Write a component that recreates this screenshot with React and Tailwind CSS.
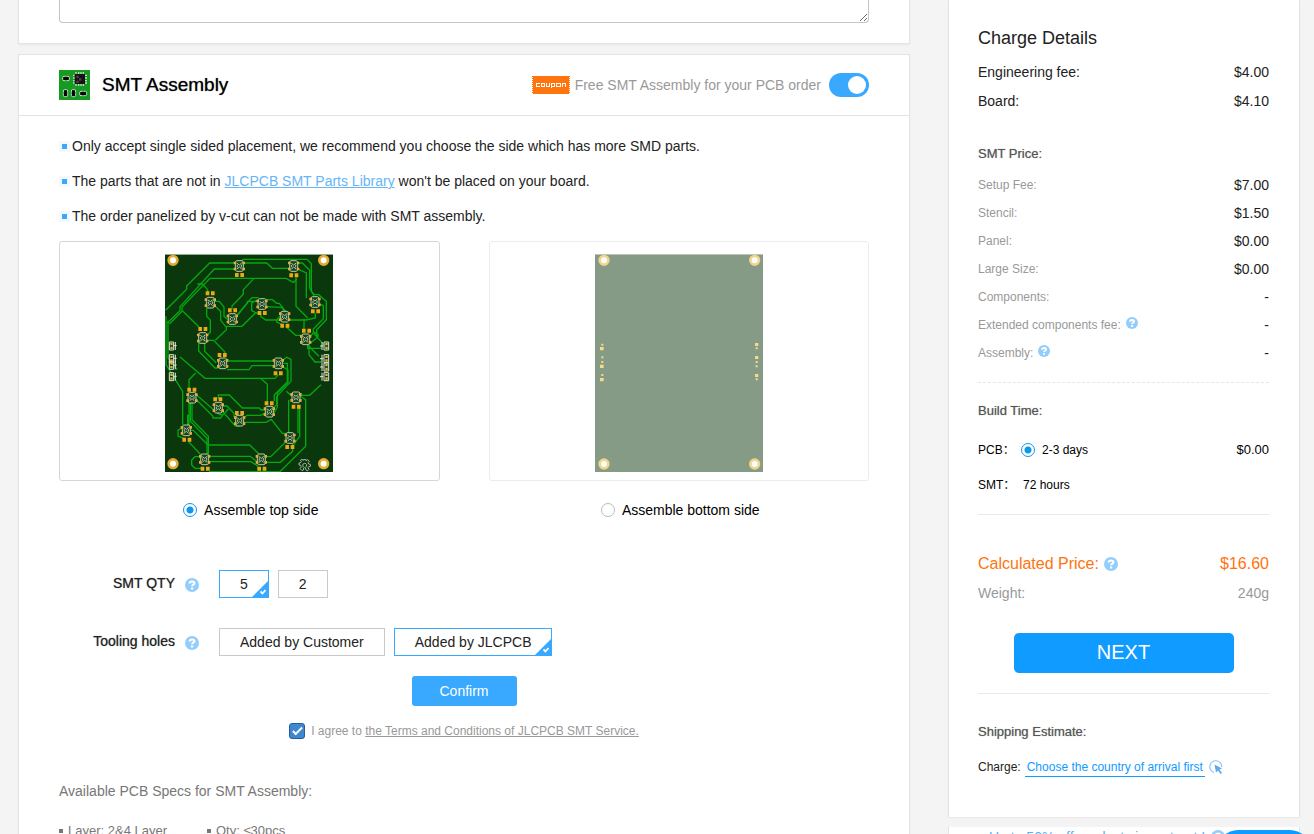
import React from "react";

const holes = [[39, 37], [491, 37], [39, 647], [491, 647]];

const chips = [
  [238, 54], [401, 54], [151, 164], [217, 213], [306, 168], [374, 206], [465, 162],
  [437, 274], [128, 270], [188, 346], [355, 346], [96, 449], [175, 479], [239, 518],
  [328, 491], [408, 448], [79, 547], [134, 634], [304, 634], [390, 570],
];

const pads = [
  [238, 81], [401, 82], [150, 136], [217, 187], [306, 195], [374, 233], [466, 190],
  [439, 248], [128, 243], [186, 321], [354, 376], [95, 425], [173, 454], [238, 495],
  [327, 466], [408, 476], [80, 575], [389, 597], [135, 662], [305, 662],
];

const traces = [
  "M17 187 80 124V114L149 45H226",
  "M22 225 60 188V176L163 63H228",
  "M28 228 66 190V177L150 91H378L400 103 411 94",
  "M252 45H320L337 61H389",
  "M242 40 250 34H441L454 47V130L464 140H476L499 160V215L470 245V268",
  "M416 45H427L449 67V120L462 144",
  "M415 64 439 75V150",
  "M408 88V175L443 210",
  "M282 91 250 125V139L216 174V184",
  "M112 108H127L143 125V136",
  "M164 160H178L192 177V205L207 217",
  "M164 173 182 190V217L197 235H246L286 195H296",
  "M140 180V205L151 217V253L140 262",
  "M228 207 268 157 276 149H296",
  "M232 201 262 165V160L296 160",
  "M318 155H337L350 166H358L377 190",
  "M318 176 365 178 377 194",
  "M302 195V205L317 216H361",
  "M289 195 275 188V165L290 157",
  "M386 216H438L466 210V196",
  "M362 202 350 215V222L367 230",
  "M378 236 407 262H425",
  "M475 165 490 173V212L460 243V255L478 275 496 295",
  "M450 264 464 253 474 259V267L451 285",
  "M432 212V245",
  "M443 281V301H485",
  "M447 285V320L465 342H485",
  "M68 189 117 237",
  "M140 277H161L194 311V320",
  "M166 277 199 245V237",
  "M134 283V310L169 345",
  "M116 278V309L165 360H175",
  "M18 205V350L68 430V530",
  "M24 218V330L52 365",
  "M60 327 98 359 135 391H345L355 380",
  "M200 339H340",
  "M201 365H267L276 353H343",
  "M368 337 380 328 393 334V400L350 446V470L338 482",
  "M369 346H382V402L343 440V459",
  "M367 355 384 366V404L352 435V478L338 500",
  "M322 466V409L301 390",
  "M107 375 87 395V425",
  "M107 439 178 500H190L205 483",
  "M107 453 159 505V510H182L188 500",
  "M175 454V441H208L247 480H298L303 486H315",
  "M187 474H201L222 496V505L228 510",
  "M187 490 226 534H238L242 526",
  "M251 510 261 502H302L317 494",
  "M251 523H318L334 514 367 556H379",
  "M91 445V520L141 571V624",
  "M96 458V515L145 565 145 625",
  "M87 460V535M83 500V540",
  "M90 547H100L144 591H269L299 620V625",
  "M68 537 54 547V564L72 571",
  "M85 580 126 624",
  "M146 625H271L295 644",
  "M147 641H273L295 655",
  "M122 626H105L95 636V651L105 661H124",
  "M147 671H360L437 595V455L420 444",
  "M315 626H332L380 579",
  "M316 643H361L398 610V588",
  "M386 455V556M419 480V565L401 590M414 480V555",
  "M420 442H449L483 410",
  "M379 430 398 446",
  "M443 290 466 314 477 325",
];

const leftPorts = [282, 320, 340, 374];
const rightPorts = [282, 320, 345, 374];

function TopBoard() {
  return (
    <svg width="168" height="218" viewBox="15 18 504 654" role="img" aria-label="Top side">
      <rect x="15" y="18" width="504" height="654" fill="#0b370d" />
      <rect x="15" y="18" width="504" height="3" fill="#91ab91" />
      <g fill="none" stroke="#04a80f" strokeWidth="4">
        {traces.map((d) => <path key={d} d={d} />)}
      </g>
      {chips.map(([x, y]) => (
        <g key={`${x}-${y}`} transform={`translate(${x} ${y})`}>
          <path d="M-12-13-8-16H8L12-13V13L8 16H-8L-12 13Z" fill="#174519" stroke="#b5c7b2" strokeWidth="3" />
          <path d="M-7-8 0-3 7-9M-7 9 0 3 7 9M-6-3V4M6-4V4" fill="none" stroke="#b5c7b2" strokeWidth="3" />
          <path d="M-17-13h8v8h-8zM9-13h8v8h-8zM-17 5h8v8h-8zM9 5h8v8h-8z" fill="#dcae45" />
        </g>
      ))}
      {pads.map(([x, y]) => (
        <path key={`${x}-${y}`} d={`M${x - 13} ${y - 6}h11v12h-11zM${x + 3} ${y - 6}h11v12h-11z`} fill="#eba916" />
      ))}
      <g fill="none" stroke="#dfe6dc" strokeWidth="3">
        {leftPorts.map((y) => (
          <path key={y} d={`M28 ${y}h13v24h-13zM46 ${y}v24M40 ${y + 11}h10`} />
        ))}
        {rightPorts.map((y) => (
          <path key={y} d={`M492 ${y}h14v24h-14zM486 ${y}v24M480 ${y + 12}h10`} />
        ))}
      </g>
      <g fill="#e4b641">
        {leftPorts.map((y) => <path key={y} d={`M31 ${y + 3}h7v7h-7zM31 ${y + 14}h7v7h-7z`} />)}
        {rightPorts.map((y) => <path key={y} d={`M496 ${y + 3}h7v7h-7zM496 ${y + 14}h7v7h-7z`} />)}
      </g>
      <g transform="translate(434 653)" fill="none" stroke="#c2ccbf" strokeWidth="2.5">
        <path d="M-4 13-8 15-14 9-10 4-12-1-17-2V-8L-12-9-10-12-13-16-8-19-4-16V-18H4V-15L9-18 14-13 10-9 12-5 17-4V2L12 3 10 6 13 11 8 16 4 13 2 5Q7 2 6-3 4-7 0-7-5-7-6-2-6 2-2 5Z" />
      </g>
      {holes.map(([x, y]) => (
        <circle key={`${x}-${y}`} cx={x} cy={y} r="13" fill="#fff" stroke="#e5ac32" strokeWidth="8" />
      ))}
    </svg>
  );
}

function BottomBoard() {
  return (
    <svg width="168" height="218" viewBox="27 18 504 654" role="img" aria-label="Bottom side">
      <rect x="27" y="18" width="504" height="654" fill="#859b85" />
      <rect x="27" y="18" width="504" height="3" fill="#b9c6b9" />
      {[[54, 37], [506, 37], [54, 648], [506, 648]].map(([x, y]) => (
        <circle key={`${x}-${y}`} cx={x} cy={y} r="13" fill="#fff" stroke="#f0d58d" strokeWidth="8" />
      ))}
      <g fill="#f6d98a">
        <path d="M42 297h11v10h-11zM42 350h11v10h-11zM42 390h11v10h-11zM507 285h10v9h-10zM507 324h10v9h-10zM507 378h10v9h-10z" />
        <path d="M46 287h6v6h-6zM46 325h6v6h-6zM46 339h6v6h-6zM46 378h6v6h-6zM509 298h6v6h-6zM509 339h6v6h-6zM509 352h6v6h-6zM509 391h6v6h-6z" />
      </g>
    </svg>
  );
}

function SmtLogo() {
  return (
    <svg width="31" height="30" viewBox="0 0 93 90" aria-hidden="true">
      <rect width="93" height="90" fill="#169a22" />
      <path d="M51 6v42M59 6v42M66 6v42M73 6v42M42 16h42M42 24h42M42 32h42M42 39h42" stroke="#c7ddc8" strokeWidth="4" />
      <rect x="47" y="12" width="31" height="30" fill="#171314" />
      <path d="M52 17h7v7h-7zM60 25h7v7h-7zM52 32h7v7h-7z" fill="#4b4447" />
      <g fill="#050505" stroke="#c7ddc8" strokeWidth="3">
        <rect x="11" y="19" width="20" height="13" rx="4" />
        <rect x="13" y="59" width="13" height="21" rx="4" />
        <rect x="37" y="59" width="13" height="21" rx="4" />
        <rect x="62" y="64" width="21" height="13" rx="4" />
      </g>
      <path d="M21 17v17M11 69h17M35 69h17M72 62v17" stroke="#169a22" strokeWidth="3" />
      <path d="M17 22h9v8h-9zM15 64h8v12h-8zM39 64h8v12h-8zM67 67h11v8h-11z" fill="#050505" />
    </svg>
  );
}

function Coupon() {
  return (
    <svg width="38" height="18" viewBox="0 0 38 18" role="img" aria-label="Coupon">
      <rect x="1" width="36" height="18" fill="#ff740d" />
      <path d="M.5 0v18M37.500 0v18" stroke="#ff740d" strokeDasharray="1 1" />
      <g fill="none" stroke="#fff" shapeRendering="crispEdges">
        <path d="M8 7.500H4.500V10.500H8M9.500 7.500H12.500V10.500H9.500ZM14.500 7V10.500H17.500V7M19.500 12V7.500H22.500V10.500H20M24.500 7.500H28.500V10.500H24.500ZM30.500 11V7.500H33.500V11" />
      </g>
    </svg>
  );
}

function Help({ size = 13 }) {
  return (
    <svg width={size} height={size} viewBox="0 0 14 14" className="shrink-0" role="img" aria-label="Help">
      <circle cx="7" cy="7" r="7" fill="#92cdfc" />
      <path d="M4.600 5.500C4.700 4 5.600 3.500 7 3.500s2.400.6 2.400 1.700c0 1.600-2.300 1.300-2.300 3.100" fill="none" stroke="#fff" strokeWidth="2.100" />
      <rect x="6" y="9.400" width="2.200" height="2.100" fill="#fff" />
    </svg>
  );
}

function Radio(props) {
  return (
    <input
      type="radio"
      className="size-[14px] shrink-0 appearance-none rounded-full border border-[#bbb] bg-white checked:border-[#1296e6] checked:bg-[radial-gradient(circle,#0d99ea_3px,white_4px)]"
      {...props}
    />
  );
}

function Option({ selected, children }) {
  return (
    <button
      type="button"
      aria-pressed={selected}
      className={`relative h-7 border px-5 text-[14px] leading-[26px] text-[#222] ${selected ? "border-[#38a9ff]" : "border-[#c9c9c9]"}`}
    >
      {children}
      {selected && (
        <svg width="16" height="16" viewBox="0 0 16 16" className="absolute right-0 bottom-0" aria-hidden="true">
          <path d="M16 0V16H0Z" fill="#38a9ff" />
          <path d="M8.500 10.500 10.500 12.500 13.500 9" fill="none" stroke="#fff" strokeWidth="1.800" />
        </svg>
      )}
    </button>
  );
}

function OptionRow({ label, children }) {
  return (
    <>
      <div className="pb-[2px] text-right [text-shadow:0_0_1px_#777]">{label}</div>
      <div className="flex items-center" role="group" aria-label={label}>
        <span className="pt-[2px]"><Help size={14} /></span>
        <div className="ml-5 flex gap-[9px]">{children}</div>
      </div>
    </>
  );
}

function Note({ children }) {
  return (
    <li className="flex items-center gap-[2px] leading-[35px]">
      <span className="flex size-[11px] items-center justify-center bg-[#f3f8fc]">
        <span className="size-[5px] bg-[#38a9ff]" />
      </span>
      <span>{children}</span>
    </li>
  );
}

const fees = [
  ["Setup Fee:", "$7.00"],
  ["Stencil:", "$1.50"],
  ["Panel:", "$0.00"],
  ["Large Size:", "$0.00"],
  ["Components:", "-"],
  ["Extended components fee:", "-", true],
  ["Assembly:", "-", true],
];

function Row({ className, children }) {
  return <div className={`flex items-center justify-between ${className}`}>{children}</div>;
}

function SubHeading({ className = "", children }) {
  return <h3 className={`text-[13px] leading-7 text-[#555] [text-shadow:0_0_1px_#999] ${className}`}>{children}</h3>;
}

export default function App() {
  return (
    <div className="flex h-screen items-start gap-[38px] overflow-hidden bg-[#f4f4f4] pr-[14px] pl-[18px] font-['Liberation_Sans',Arial,'Noto_Sans_CJK_SC',sans-serif] text-[14px] text-[#222]">
      <main className="min-w-0 flex-1">
        <section className="border border-t-0 border-[#e4e4e4] bg-white px-10 pb-5 shadow-xs">
          <textarea aria-label="Remark" className="block h-[23px] min-h-0 w-full rounded-b border border-t-0 border-[#c4c4c4]" />
        </section>

        <section className="mt-[10px] border border-[#e4e4e4] bg-white pb-10 shadow-xs">
          <header className="flex h-[61px] items-center justify-between border-b border-[#e2e2e2] px-10">
            <div className="flex items-center gap-3">
              <SmtLogo />
              <h2 className="text-[19px] text-black [text-shadow:0_0_1px_#555]">SMT Assembly</h2>
            </div>
            <label className="flex items-center text-[#999]">
              <Coupon />
              <span className="mr-2 ml-[5px]">Free SMT Assembly for your PCB order</span>
              <input
                type="checkbox"
                role="switch"
                defaultChecked
                className="flex h-6 w-10 appearance-none items-center rounded-full bg-[#ccc] px-[3px] before:size-[18px] before:rounded-full before:bg-white checked:justify-end checked:bg-[#38a9ff]"
              />
            </label>
          </header>

          <div className="px-10">
            <ul className="pt-[13px]">
              <Note>Only accept single sided placement, we recommend you choose the side which has more SMD parts.</Note>
              <Note>The parts that are not in <a href="#parts" className="text-[#66b5f8] underline">JLCPCB SMT Parts Library</a> won't be placed on your board.</Note>
              <Note>The order panelized by v-cut can not be made with SMT assembly.</Note>
            </ul>

            <div className="mt-[7px] grid grid-cols-2 gap-[49px]">
              <div>
                <div className="flex h-60 items-center justify-center rounded-[3px] border border-[#d6d6d6] pt-1">
                  <TopBoard />
                </div>
                <label className="mt-[19px] flex h-5 items-center justify-center gap-[7px] pl-[3px] text-black">
                  <Radio name="side" defaultChecked /> Assemble top side
                </label>
              </div>
              <div>
                <div className="flex h-60 items-center justify-center rounded-[3px] border border-[#ececec] pt-1">
                  <BottomBoard />
                </div>
                <label className="mt-[19px] flex h-5 items-center justify-center gap-[7px] pl-[3px] text-black">
                  <Radio name="side" /> Assemble bottom side
                </label>
              </div>
            </div>

            <div className="mt-[50px] grid grid-cols-[116px_auto] items-center gap-x-[10px] gap-y-[30px]">
              <OptionRow label="SMT QTY">
                <Option selected>5</Option>
                <Option>2</Option>
              </OptionRow>
              <OptionRow label="Tooling holes">
                <Option>Added by Customer</Option>
                <Option selected>Added by JLCPCB</Option>
              </OptionRow>
            </div>

            <div className="mt-5 flex justify-center">
              <button type="button" className="h-[30px] w-[105px] rounded-[3px] bg-[#38a9ff] pt-px text-white">Confirm</button>
            </div>

            <div className="mt-4 flex items-center justify-center gap-[6px] text-[12px] leading-[18px] text-[#999]">
              <input
                id="agree"
                type="checkbox"
                defaultChecked
                className="grid size-4 appearance-none place-items-center rounded-[3px] border border-[#265e9c] bg-[#3f87cf] before:mb-[3px] before:h-[10px] before:w-[5px] before:rotate-45 before:border-r-2 before:border-b-2 before:border-white"
              />
              <span>
                <label htmlFor="agree">I agree to </label>
                <a href="#terms" className="underline">the Terms and Conditions of JLCPCB SMT Service.</a>
              </span>
            </div>

            <h3 className="mt-[41px] leading-5 text-[#777]">Available PCB Specs for SMT Assembly:</h3>
            <ul className="mt-5 flex text-[13px] leading-5 text-[#777]">
              <li className="flex w-[148px] items-center gap-[5px]"><span className="size-1 bg-[#777]" />Layer: 2&amp;4 Layer</li>
              <li className="flex items-center gap-[5px]"><span className="size-1 bg-[#777]" />Qty: ≤30pcs</li>
            </ul>
          </div>
        </section>
      </main>

      <div className="w-[352px] shrink-0">
        <aside className="border border-y-0 border-[#e4e4e4] bg-white pt-[18px] pr-[30px] pb-[36px] pl-[29px] shadow-xs">
          <h2 className="text-[18px] leading-10">Charge Details</h2>
          <Row className="h-[29px]"><span>Engineering fee:</span><span>$4.00</span></Row>
          <Row className="h-[29px]"><span>Board:</span><span>$4.10</span></Row>

          <SubHeading className="mt-6 mb-[3px]">SMT Price:</SubHeading>
          {fees.map(([label, value, help]) => (
            <Row key={label} className="h-7">
              <span className="flex items-center gap-[5px] text-[12px] text-[#999]">
                {label}
                {help && <span className="pb-1"><Help size={12} /></span>}
              </span>
              <span>{value}</span>
            </Row>
          ))}

          <div className="mt-[15px] border-t border-dashed border-[#e6e6e6] pt-[14px]">
            <SubHeading className="mb-[7px]">Build Time:</SubHeading>
            <Row className="h-[35px] text-black">
              <div className="flex items-center text-[12px]">
                <span className="w-[43px]" lang="zh-CN">PCB：</span>
                <label className="flex items-center gap-[7px]"><Radio name="build" defaultChecked />2-3 days</label>
              </div>
              <span className="text-[13px]">$0.00</span>
            </Row>
            <div className="flex h-[35px] items-center text-[12px] text-black">
              <span className="w-[45px]" lang="zh-CN">SMT：</span>72 hours
            </div>
          </div>

          <div className="mt-3 border-t border-[#e9e9e9] pt-[35px]">
            <Row className="h-7 text-[16px] text-[#ff740d]">
              <span className="flex items-center gap-[5px]">Calculated Price: <Help size={14} /></span>
              <span>$16.60</span>
            </Row>
            <Row className="mt-px h-7 text-[#999]"><span>Weight:</span><span>240g</span></Row>
            <div className="mt-[26px] flex justify-center">
              <button type="button" className="h-10 w-[220px] rounded-[5px] bg-[#0f9bff] pb-[2px] text-[20px] text-white">NEXT</button>
            </div>
          </div>

          <div className="mt-5 border-t border-[#e9e9e9] pt-6">
            <SubHeading className="mb-[7px]">Shipping Estimate:</SubHeading>
            <div className="flex h-7 items-center text-[12px]">
              <span>Charge:</span>
              <a href="#shipping" className="ml-1 border-b border-[#0f9bff] px-[2px] leading-[18px] text-[#0f9bff]">Choose the country of arrival first</a>
              <svg width="14" height="14" viewBox="0 0 14 14" className="ml-1" aria-hidden="true">
                <path d="M5 12.500A6 6 0 1 1 12.800 7" fill="none" stroke="#8cc1f2" strokeWidth="1.100" />
                <path d="M5.500 4.500 13 8.500 10.500 9.500 13 13 11.500 14 9 10.500 7 12.500Z" fill="#62a8ed" />
              </svg>
            </div>
          </div>
        </aside>

        <div className="mt-[10px] flex items-center gap-[6px] border-x border-[#e4e4e4] bg-white pl-10 text-[14px] leading-5 text-[#5aaef0]">
          <span>Up to 50% off products import out !</span>
          <Help size={14} />
        </div>
      </div>
      <button type="button" aria-label="Open chat" className="fixed right-1 -bottom-9 h-10 w-[92px] rounded-t-[20px] bg-[#0f9bff]" />
    </div>
  );
}
